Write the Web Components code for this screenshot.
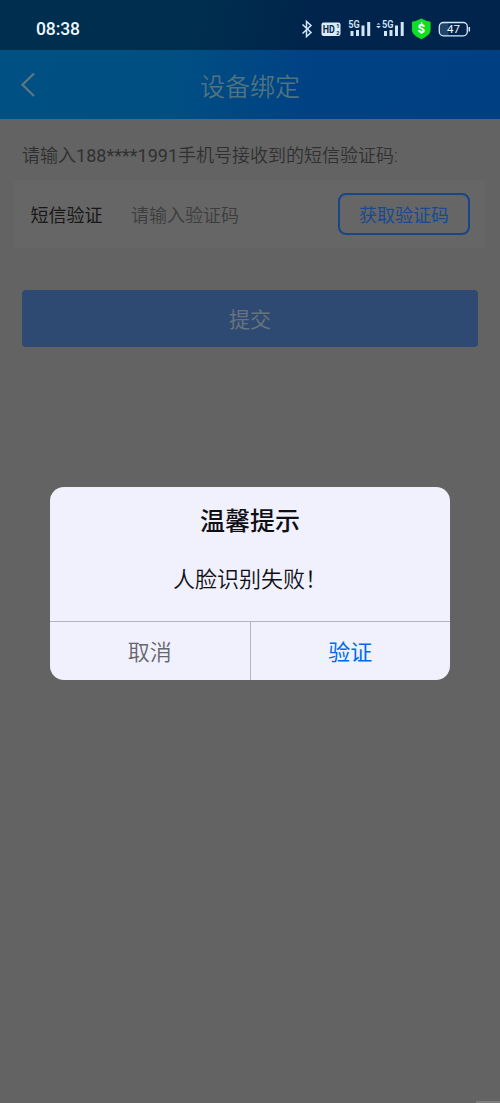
<!DOCTYPE html>
<html lang="zh-CN">
<head>
<meta charset="utf-8">
<title>设备绑定</title>
<style>
html,body{margin:0;height:100%;background:#636363}
body{font-family:Roboto,"Noto Sans CJK SC",sans-serif;overflow:hidden}
</style>
</head>
<body>
<bind-page>
  <status-bar slot="top" time="08:38"></status-bar>
  <nav-bar slot="top">设备绑定</nav-bar>
  <sms-form>请输入<span style="letter-spacing:.02px;font-weight:400">188****1991</span>手机号接收到的短信验证码:</sms-form>
  <alert-dialog slot="modal"><span slot="title">温馨提示</span>人脸识别失败！<span slot="cancel">取消</span><span slot="ok">验证</span></alert-dialog>
</bind-page>
<script>
const define = (name, html, init) => customElements.define(name, class extends HTMLElement {
  constructor() {
    super();
    const t = document.createElement('template');
    t.innerHTML = html;
    this.attachShadow({mode: 'open'}).append(t.content.cloneNode(true));
    if (init) init(this);
  }
});

define('bind-page', `<style>
:host{display:flex;flex-direction:column;position:relative;height:1103px;width:500px;background:#636363;overflow:hidden}
.modal{position:absolute;inset:0;display:flex;justify-content:center;align-items:flex-start;padding-top:487px;box-sizing:border-box}
.edge{width:24px;height:2px;margin:auto 0 0 auto;background:#7c7c7c}
</style><slot name="top"></slot><slot></slot><div class="edge"></div><div class="modal"><slot name="modal"></slot></div>`);

define('status-bar', `<style>
:host{display:flex;align-items:center;height:50px;padding:8px 29px 0 36px;box-sizing:border-box;background:linear-gradient(100deg,#002e4e 0%,#002e4e 40%,#00244c 62%,#00244c 100%);color:#eef8ff}
.time{flex:1;font:500 17.5px/24px Roboto,sans-serif;letter-spacing:-.1px}
svg{display:block;flex:none}
text{font-family:Roboto,sans-serif}
</style><span class="time"></span>
<svg width="171" height="24" viewBox="300 17 171 24" fill="none" stroke="#d3e6f8">
<path d="M302.5 24.5l8.500 8-4.500 4v-15l4.500 4-8.500 8" stroke-width="1.500"/>
<rect x="321.500" y="22.500" width="19" height="13.500" rx="2" fill="#dcebf9" stroke="none"/>
<g fill="#07284a" stroke="none"><text transform="translate(322.800 33.400) scale(.77 1)" font-size="11.500" font-weight="700">HD</text><text x="336.200" y="28.200" font-size="5.500" font-weight="700">1</text><text x="336.200" y="35.200" font-size="5.500" font-weight="700">2</text></g>
<g fill="#d3e6f8" stroke="none">
<text x="348.300" y="28.200" font-size="10" font-weight="600" textLength="11.500" lengthAdjust="spacingAndGlyphs">5G</text>
<path d="M350.500 31h3v5h-3zM356 30h3v6h-3zM361.500 25.500h3v10.500h-3zM367.200 22h3v14h-3z"/>
<path d="M376.500 24.500h4l-2-1.500zM376 26h5l-2.500 2.200z"/>
<text x="382" y="28.200" font-size="10" font-weight="600" textLength="11.500" lengthAdjust="spacingAndGlyphs">5G</text>
<path d="M384 31h3v5h-3zM389.500 30h3v6h-3zM395 25.500h3v10.500h-3zM400.700 22h3v14h-3z"/>
</g>
<path d="M421.300 18.500q4.500 2.500 9.300 3.200v8.800q-.5 5-9.300 8.700-8.800-3.700-9.300-8.700v-8.800q4.800-.7 9.300-3.200z" fill="#10dd24" stroke="none"/>
<text x="421.300" y="33.200" font-size="13" font-weight="900" text-anchor="middle" fill="#fff" stroke="none">$</text>
<path d="M443 22.500h5.500v13.500h-5.500q-3.500-.5-3.500-3.500v-6.500q0-3 3.500-3.500z" fill="#24456a" stroke="none"/>
<rect x="439.300" y="22.500" width="28" height="13.300" rx="4" stroke-width="1.300"/>
<path d="M469.300 27v4.500" stroke-width="1.500"/>
<text x="453.500" y="33.300" font-size="11.500" font-weight="400" text-anchor="middle" fill="#eef8ff" stroke="none">47</text>
</svg>`, el => { el.shadowRoot.querySelector('.time').textContent = el.getAttribute('time'); });

define('nav-bar', `<style>
:host{display:grid;grid-template-columns:50px 1fr 50px;align-items:center;height:69px;padding-top:4px;box-sizing:border-box;background:linear-gradient(100deg,#005083 0%,#004f83 34%,#004184 62%,#003f82 100%);color:#4f7380}
svg{display:block;margin:-2px 0 0 20px}
.t{font-size:25px;line-height:36px;text-align:center;font-weight:350;padding-top:2px}
</style><svg width="18" height="28" viewBox="0 0 18 28" fill="none" stroke="#5d7680" stroke-width="2.300"><path d="M14 1.500L2.500 12.800L14 24"/></svg><div class="t"><slot></slot></div>`);

define('sms-form', `<style>
:host{display:flex;flex-direction:column;padding:24px 14px 0}
.tip{font-size:18px;line-height:26px;margin:0 8px 11px;color:#303030;font-weight:350;white-space:nowrap}
.row{display:flex;align-items:center;height:68px;box-sizing:border-box;padding:0 16px 0 16.5px;background:#666;border-radius:4px;font-size:18px}
.label{width:100.5px;color:#181818}
.ph{flex:1;color:#3d3d3d;font-weight:350}
.code{width:132px;height:42px;box-sizing:border-box;border:2px solid #184687;border-radius:8px;color:#184a91;text-align:center;line-height:42px}
.submit{height:57px;margin:42px 8px 0;border-radius:4px;background:#2f4a72;color:#69737c;text-align:center;font-size:21px;line-height:61px}
</style><div class="tip"><slot></slot></div>
<div class="row"><span class="label">短信验证</span><span class="ph">请输入验证码</span><span class="code">获取验证码</span></div>
<div class="submit">提交</div>`);

define('alert-dialog', `<style>
:host{display:flex;flex-direction:column;width:400px;height:192.500px;border-radius:14px;background:#f1f1fe;overflow:hidden;text-align:center;color:#101014}
.title{font-size:25px;line-height:36px;font-weight:500;padding-top:17px}
.msg{font-size:22px;line-height:32px;padding-top:24px;font-weight:350;flex:1}
.actions{display:grid;grid-template-columns:199.500px 1fr;height:59px;box-sizing:border-box;border-top:1px solid #b4b4be;font-size:22px;line-height:61px}
.c{color:#66666c;font-weight:350}
.o{color:#006bea;border-left:1px solid #b4b4be;box-sizing:border-box}
</style><div class="title"><slot name="title"></slot></div><div class="msg"><slot></slot></div>
<div class="actions"><div class="c"><slot name="cancel"></slot></div><div class="o"><slot name="ok"></slot></div></div>`);
</script>
</body>
</html>
